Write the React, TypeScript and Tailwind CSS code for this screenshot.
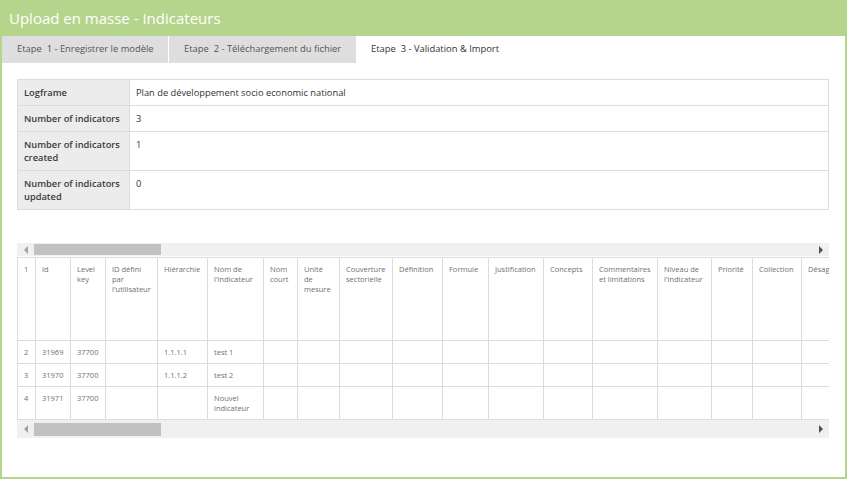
import React from "react";

const FONT = { fontFamily: '"Open Sans", "Liberation Sans", sans-serif' };

const infoRows: { label: string; value: string }[] = [
  { label: "Logframe", value: "Plan de développement socio economic national" },
  { label: "Number of indicators", value: "3" },
  { label: "Number of indicators created", value: "1" },
  { label: "Number of indicators updated", value: "0" },
];

const columns: { title: string; width: number }[] = [
  { title: "1", width: 18 },
  { title: "Id", width: 35 },
  { title: "Level key", width: 35 },
  { title: "ID défini par l'utilisateur", width: 52 },
  { title: "Hiérarchie", width: 50 },
  { title: "Nom de l'indicateur", width: 56 },
  { title: "Nom court", width: 34 },
  { title: "Unité de mesure", width: 42 },
  { title: "Couverture sectorielle", width: 53 },
  { title: "Définition", width: 50 },
  { title: "Formule", width: 46 },
  { title: "Justification", width: 55 },
  { title: "Concepts", width: 49 },
  { title: "Commentaires et limitations", width: 65 },
  { title: "Niveau de l'indicateur", width: 54 },
  { title: "Priorité", width: 41 },
  { title: "Collection", width: 49 },
  { title: "Désagrégation", width: 80 },
];

const rows: { cells: string[]; h: string }[] = [
  { cells: ["2", "31969", "37700", "", "1.1.1.1", "test 1"], h: "h-[23px]" },
  { cells: ["3", "31970", "37700", "", "1.1.1.2", "test 2"], h: "h-[23px]" },
  { cells: ["4", "31971", "37700", "", "", "Nouvel indicateur"], h: "h-[33px]" },
];

function ScrollBar({ tall }: { tall?: boolean }) {
  return (
    <div className={`flex items-center bg-[#f0f0f0] ${tall ? "h-[18px]" : "h-[13px]"}`}>
      <div className="flex w-[17px] justify-center">
        <div className="h-0 w-0 border-y-[4px] border-r-[4px] border-y-transparent border-r-[#a3a3a3]" />
      </div>
      <div className={`w-[127px] bg-[#c1c1c1] ${tall ? "h-[13px]" : "h-[11px]"}`} />
      <div className="flex-1" />
      <div className="flex w-[17px] justify-center">
        <div className="h-0 w-0 border-y-[4px] border-l-[4px] border-y-transparent border-l-[#505050]" />
      </div>
    </div>
  );
}

export default function App() {
  return (
    <div style={FONT} className="h-[479px] w-[847px] overflow-hidden bg-white">
      <div className="flex h-full flex-col border-x-2 border-b-2 border-[#b5d48c]">
        <div className="-mx-[2px] flex h-[36px] items-center bg-[#b5d48c] px-[9px] text-[15px] text-white">
          Upload en masse - Indicateurs
        </div>

        <div className="flex h-[27px] whitespace-nowrap text-[9.4px] text-[#555]">
          <div className="flex w-[166px] items-center bg-[#dedede] px-[15px]">Etape&nbsp; 1 - Enregistrer le modèle</div>
          <div className="ml-px flex w-[187px] items-center bg-[#dedede] px-[15px]">Etape&nbsp; 2 - Téléchargement du fichier</div>
          <div className="flex items-center bg-white px-[15px] text-[#333]">Etape&nbsp; 3 - Validation &amp; Import</div>
        </div>

        <div className="flex-1 px-[15px] pt-[16px]">
          <table className="w-[812px] table-fixed border-collapse text-[9.3px] leading-[13px] text-[#333]">
            <colgroup>
              <col className="w-[112px]" />
              <col />
            </colgroup>
            <tbody>
              {infoRows.map((r, i) => (
                <tr key={i} className={i < 2 ? "h-[26px]" : "h-[39px]"}>
                  <td className="border border-[#dcdcdc] bg-[#ececec] px-[6px] pt-[6px] align-top font-semibold text-[#3a3a3a]">
                    {r.label}
                  </td>
                  <td className="border border-[#dcdcdc] px-[6px] pt-[6px] align-top">{r.value}</td>
                </tr>
              ))}
            </tbody>
          </table>

          <div className="mt-[33px] w-[812px] overflow-hidden">
            <ScrollBar />
            <div className="mt-px w-[812px] overflow-hidden">
              <table className="table-fixed border-collapse text-[7.5px] leading-[10px] text-[#707070]" style={{ width: 864 }}>
                <colgroup>
                  {columns.map((c, i) => (
                    <col key={i} style={{ width: c.width }} />
                  ))}
                </colgroup>
                <tbody>
                  <tr className="h-[83px]">
                    {columns.map((c, i) => (
                      <td key={i} className="border border-[#dcdcdc] px-[6px] pt-[6px] align-top">
                        {c.title}
                      </td>
                    ))}
                  </tr>
                  {rows.map((r, ri) => (
                    <tr key={ri} className={r.h}>
                      {columns.map((_, ci) => (
                        <td key={ci} className="border border-[#dcdcdc] px-[6px] pt-[6px] align-top">
                          {r.cells[ci] ?? ""}
                        </td>
                      ))}
                    </tr>
                  ))}
                </tbody>
              </table>
            </div>
            <ScrollBar tall />
          </div>
        </div>
      </div>
    </div>
  );
}
